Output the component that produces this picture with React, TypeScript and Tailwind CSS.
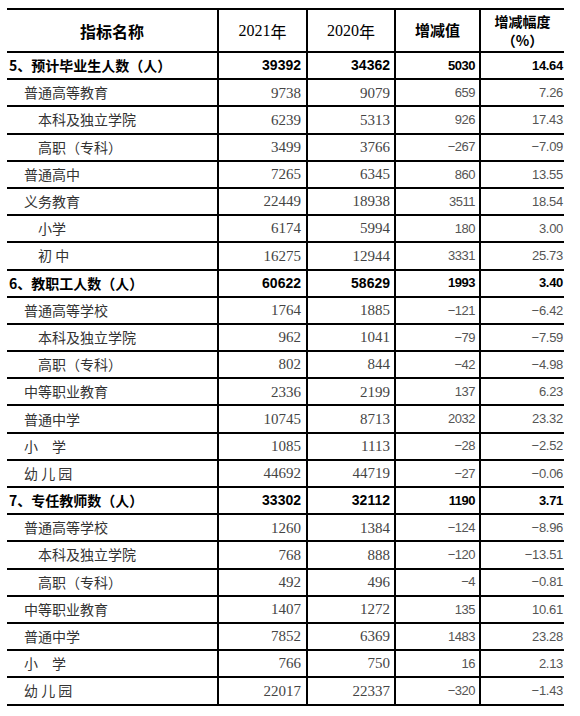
import React from 'react';

type Row = {
  name: string;
  level: 0 | 1 | 2;
  v2021: string;
  v2020: string;
  diff: string;
  pct: string;
};

const rows: Row[] = [
  { name: '5、预计毕业生人数（人）', level: 0, v2021: '39392', v2020: '34362', diff: '5030', pct: '14.64' },
  { name: '普通高等教育', level: 1, v2021: '9738', v2020: '9079', diff: '659', pct: '7.26' },
  { name: '本科及独立学院', level: 2, v2021: '6239', v2020: '5313', diff: '926', pct: '17.43' },
  { name: '高职（专科）', level: 2, v2021: '3499', v2020: '3766', diff: '−267', pct: '−7.09' },
  { name: '普通高中', level: 1, v2021: '7265', v2020: '6345', diff: '860', pct: '13.55' },
  { name: '义务教育', level: 1, v2021: '22449', v2020: '18938', diff: '3511', pct: '18.54' },
  { name: '小学', level: 2, v2021: '6174', v2020: '5994', diff: '180', pct: '3.00' },
  { name: '初 中', level: 2, v2021: '16275', v2020: '12944', diff: '3331', pct: '25.73' },
  { name: '6、教职工人数（人）', level: 0, v2021: '60622', v2020: '58629', diff: '1993', pct: '3.40' },
  { name: '普通高等学校', level: 1, v2021: '1764', v2020: '1885', diff: '−121', pct: '−6.42' },
  { name: '本科及独立学院', level: 2, v2021: '962', v2020: '1041', diff: '−79', pct: '−7.59' },
  { name: '高职（专科）', level: 2, v2021: '802', v2020: '844', diff: '−42', pct: '−4.98' },
  { name: '中等职业教育', level: 1, v2021: '2336', v2020: '2199', diff: '137', pct: '6.23' },
  { name: '普通中学', level: 1, v2021: '10745', v2020: '8713', diff: '2032', pct: '23.32' },
  { name: '小　学', level: 1, v2021: '1085', v2020: '1113', diff: '−28', pct: '−2.52' },
  { name: '幼 儿 园', level: 1, v2021: '44692', v2020: '44719', diff: '−27', pct: '−0.06' },
  { name: '7、专任教师数（人）', level: 0, v2021: '33302', v2020: '32112', diff: '1190', pct: '3.71' },
  { name: '普通高等学校', level: 1, v2021: '1260', v2020: '1384', diff: '−124', pct: '−8.96' },
  { name: '本科及独立学院', level: 2, v2021: '768', v2020: '888', diff: '−120', pct: '−13.51' },
  { name: '高职（专科）', level: 2, v2021: '492', v2020: '496', diff: '−4', pct: '−0.81' },
  { name: '中等职业教育', level: 1, v2021: '1407', v2020: '1272', diff: '135', pct: '10.61' },
  { name: '普通中学', level: 1, v2021: '7852', v2020: '6369', diff: '1483', pct: '23.28' },
  { name: '小　学', level: 1, v2021: '766', v2020: '750', diff: '16', pct: '2.13' },
  { name: '幼 儿 园', level: 1, v2021: '22017', v2020: '22337', diff: '−320', pct: '−1.43' },
];

const cjk = "font-['Noto_Sans_CJK_SC',sans-serif]";
const serifNum = "font-['Liberation_Serif','Noto_Sans_CJK_SC',serif]";
const sansNum = "font-['Liberation_Sans','Noto_Sans_CJK_SC',sans-serif]";
const cols = 'grid grid-cols-[210px_89px_88px_85px_85px]';

function DataRow({ row }: { row: Row }) {
  const bold = row.level === 0;
  const indent = row.level === 0 ? 'pl-[2px]' : row.level === 1 ? 'pl-[17px]' : 'pl-[31px]';
  const numCell = 'flex items-center justify-end border-l-2 border-black';
  return (
    <div className={`${cols} h-[27.2px] border-b-2 border-black`}>
      <div
        className={`${cjk} ${indent} flex items-center text-[14px] ${
          bold ? 'font-bold text-black' : 'font-normal text-[#333]'
        }`}
      >
        {row.name}
      </div>
      <div
        className={`${numCell} pr-[5px] ${
          bold ? `${sansNum} font-bold text-[14px] text-black` : `${serifNum} text-[15px] text-[#444]`
        }`}
      >
        {row.v2021}
      </div>
      <div
        className={`${numCell} pr-[4px] ${
          bold ? `${sansNum} font-bold text-[14px] text-black` : `${serifNum} text-[15px] text-[#444]`
        }`}
      >
        {row.v2020}
      </div>
      <div
        className={`${numCell} pr-[4px] ${sansNum} tracking-[-0.5px] ${
          bold ? 'font-bold text-[13px] text-black' : 'text-[13px] text-[#555]'
        }`}
      >
        {row.diff}
      </div>
      <div
        className={`${numCell} pr-[1px] ${sansNum} tracking-[-0.3px] ${
          bold ? 'font-bold text-[13px] text-black' : 'text-[13px] text-[#555]'
        }`}
      >
        {row.pct}
      </div>
    </div>
  );
}

export default function App() {
  return (
    <div className="w-[580px] h-[716px] bg-white pt-[8px] pl-[7px]">
      <div className="w-[557px] border-t-2 border-black">
        {/* header */}
        <div className={`${cols} h-[43px] border-b-2 border-black`}>
          <div className={`${cjk} flex items-center justify-center text-[16px] font-bold text-black`}>
            指标名称
          </div>
          <div className={`${serifNum} flex items-center justify-center border-l-2 border-black text-[16px] text-black`}>
            2021<span className={cjk}>年</span>
          </div>
          <div className={`${serifNum} flex items-center justify-center border-l-2 border-black text-[16px] text-black`}>
            2020<span className={cjk}>年</span>
          </div>
          <div className={`${cjk} flex items-center justify-center border-l-2 border-black text-[15px] font-bold text-black`}>
            增减值
          </div>
          <div
            className={`${cjk} flex flex-col items-center justify-center border-l-2 border-black text-[14px] font-bold text-black`}
          >
            <span className="leading-[19px]">增减幅度</span>
            <span className="leading-[19px]">（%）</span>
          </div>
        </div>
        {rows.map((r, i) => (
          <DataRow key={i} row={r} />
        ))}
      </div>
    </div>
  );
}
